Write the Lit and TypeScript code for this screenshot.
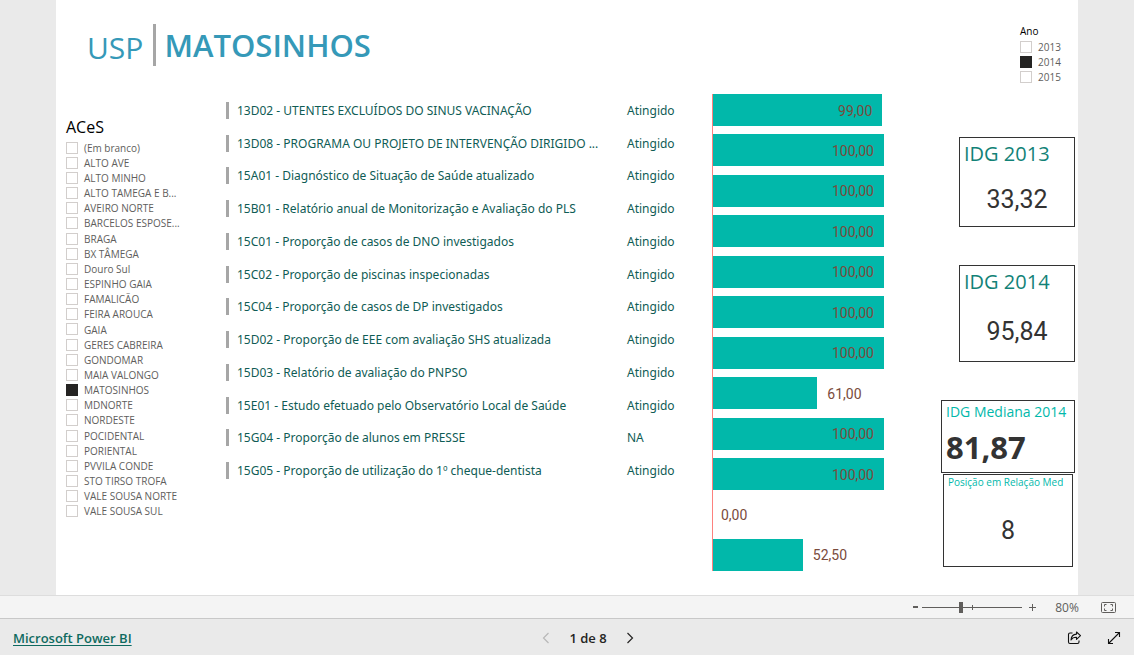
import { LitElement, html, css, svg } from "lit";
import { customElement, property, state } from "lit/decorators.js";

interface Indicator {
  name: string;
  status: string;
}

const ACES = [
  "(Em branco)", "ALTO AVE", "ALTO MINHO", "ALTO TAMEGA E B...", "AVEIRO NORTE",
  "BARCELOS ESPOSE...", "BRAGA", "BX TÂMEGA", "Douro Sul", "ESPINHO GAIA",
  "FAMALICÃO", "FEIRA AROUCA", "GAIA", "GERES CABREIRA", "GONDOMAR",
  "MAIA VALONGO", "MATOSINHOS", "MDNORTE", "NORDESTE", "POCIDENTAL",
  "PORIENTAL", "PVVILA CONDE", "STO TIRSO TROFA", "VALE SOUSA NORTE", "VALE SOUSA SUL",
];

const INDICATORS: Indicator[] = [
  { name: "13D02 - UTENTES EXCLUÍDOS DO SINUS VACINAÇÃO", status: "Atingido" },
  { name: "13D08 - PROGRAMA OU PROJETO DE INTERVENÇÃO DIRIGIDO ...", status: "Atingido" },
  { name: "15A01 - Diagnóstico de Situação de Saúde atualizado", status: "Atingido" },
  { name: "15B01 - Relatório anual de Monitorização e Avaliação do PLS", status: "Atingido" },
  { name: "15C01 - Proporção de casos de DNO investigados", status: "Atingido" },
  { name: "15C02 - Proporção de piscinas inspecionadas", status: "Atingido" },
  { name: "15C04 - Proporção de casos de DP investigados", status: "Atingido" },
  { name: "15D02 - Proporção de EEE com avaliação SHS atualizada", status: "Atingido" },
  { name: "15D03 - Relatório de avaliação do PNPSO", status: "Atingido" },
  { name: "15E01 - Estudo efetuado pelo Observatório Local de Saúde", status: "Atingido" },
  { name: "15G04 - Proporção de alunos em PRESSE", status: "NA" },
  { name: "15G05 - Proporção de utilização do 1º cheque-dentista", status: "Atingido" },
];

const VALUES = [99, 100, 100, 100, 100, 100, 100, 61, 100, 100, 0, 52.5];

@customElement("check-slicer")
class CheckSlicer extends LitElement {
  @property() heading = "";
  @property({ type: Array }) options: string[] = [];
  @property() selected = "";

  static styles = css`
    :host { display: block; }
    .group { margin: 0; padding: 0; border: 0; min-width: 0; }
    .heading {
      padding: 0;
      font-size: var(--heading-size, 16px);
      line-height: var(--heading-line, 20px);
      color: #000;
    }
    .options {
      display: grid;
      grid-auto-rows: 1fr;
      height: var(--options-height, auto);
      margin-top: var(--options-gap, 0);
    }
    .option {
      display: flex;
      align-items: center;
      gap: 6px;
      min-height: 0;
      font-size: 10px;
      line-height: 15px;
      color: #605e5c;
      white-space: nowrap;
    }
    .text { padding-top: 1px; }
    .box {
      appearance: none;
      flex: none;
      width: 12px;
      height: 12px;
      margin: 0;
      border: 1px solid #d2cecc;
      background: #fff;
    }
    .box:checked { background: #252423; border-color: #252423; }
  `;

  render() {
    return html`<fieldset class="group">
      <legend class="heading">${this.heading}</legend>
      <div class="options">
        ${this.options.map((o) => html`<label class="option">
          <input class="box" type="checkbox" .checked=${o === this.selected} /><span class="text">${o}</span>
        </label>`)}
      </div>
    </fieldset>`;
  }
}

@customElement("bar-plot")
class BarPlot extends LitElement {
  @property({ type: Array }) values: number[] = [];

  static styles = css`
    :host { display: block; padding-right: 56px; }
    .plot {
      display: flex;
      flex-direction: column;
      justify-content: space-between;
      height: 477px;
      border-left: 1px solid #fd817e;
    }
    .row { display: flex; align-items: center; height: 32px; }
    .bar {
      flex: none;
      display: flex;
      align-items: center;
      justify-content: flex-end;
      height: 100%;
      background: #01b8aa;
    }
    .value {
      padding: 1px 10px 0;
      font: 14px/20px Roboto, "Liberation Sans", sans-serif;
      color: #7a4b3c;
    }
    .row.empty .value { padding: 1px 8px 0; }
  `;

  render() {
    return html`<div class="plot">
      ${this.values.map((v) => {
        const label = html`<span class="value">${v.toFixed(2).replace(".", ",")}</span>`;
        const inside = v > 80;
        return html`<div class="row ${v === 0 ? "empty" : ""}">
          <div class="bar" style="width:${v}%">${inside ? label : ""}</div>
          ${inside ? "" : label}
        </div>`;
      })}
    </div>`;
  }
}

@customElement("app-root")
class AppRoot extends LitElement {
  @state() private zoom = 39;

  static styles = css`
    :host {
      display: flex;
      flex-direction: column;
      min-height: 100vh;
      background: #eaeaea;
      font-family: "Open Sans", "Noto Sans", sans-serif;
      color: #252423;
    }
    .stage { flex: 1; display: flex; padding: 0 56px; }
    .page {
      flex: 1;
      display: flex;
      min-width: 0;
      padding: 24px 3px 24px 10px;
      background: #fff;
    }
    .main { flex: 1; min-width: 0; }
    .title {
      display: flex;
      align-items: center;
      height: 42px;
      margin: 0 0 28px 21px;
      font-size: 31px;
      line-height: 42px;
      font-weight: 600;
      color: #3599b8;
    }
    .unit {
      padding: 6px 10px 0 0;
      font-size: 30px;
      font-weight: 400;
    }
    .place { padding-left: 8px; border-left: 3px solid #a6a6a6; }
    .body { display: grid; grid-template-columns: 160px 1fr 228px; align-items: start; }
    .aces {
      padding-top: 23px;
      --options-height: 379px;
      --options-gap: 3px;
    }
    .indicators {
      width: 100%;
      height: 393px;
      border-collapse: collapse;
      font-family: "Noto Sans", "Open Sans", sans-serif;
      font-size: 12px;
      line-height: 17px;
      color: #0f5c55;
      white-space: nowrap;
    }
    .indicators td, .indicators th { padding: 0; text-align: left; font-weight: 400; }
    .name { display: block; padding-left: 8px; border-left: 3px solid #a6a6a6; }
    .indicators .status { width: 85px; }

    .side { flex: none; display: flex; flex-direction: column; align-items: flex-end; width: 135px; }
    .years {
      width: 55px;
      margin-bottom: 53px;
      --heading-size: 10px;
      --heading-line: 14px;
      --options-height: 45px;
      --options-gap: 1px;
    }
    .card {
      display: flex;
      flex-direction: column;
      box-sizing: border-box;
      width: 116px;
      border: 1px solid #333;
      background: #fff;
    }
    .card h2 { margin: 0; padding: 0 4px; font-size: 20px; line-height: 32px; font-weight: 400; color: #128277; white-space: nowrap; }
    .figure { margin: 0; flex: 1; text-align: center; font: 25px/32px Roboto, "Liberation Sans", sans-serif; color: #333; }
    .first { height: 90px; margin-bottom: 38px; }
    .first .figure { padding-top: 14px; }
    .second { height: 97px; margin-bottom: 38px; }
    .second .figure { padding-top: 18px; }
    .median { width: 134px; height: 73px; margin-bottom: 1px; }
    .median h2 { font-size: 14px; line-height: 22px; color: #01b8aa; }
    .median .figure { padding: 4px 4px 0; text-align: left; font: 700 31px/40px "Open Sans", sans-serif; }
    .position { width: 130px; height: 93px; margin-right: 2px; }
    .position h2 { font-size: 10px; line-height: 15px; color: #01b8aa; }
    .position .figure { padding-top: 25px; }

    .zoombar {
      display: flex;
      align-items: center;
      justify-content: flex-end;
      height: 22px;
      padding-right: 18px;
      border-top: 1px solid #ddd;
      border-bottom: 1px solid #c8c8c8;
      background: #f4f4f4;
      font-size: 12px;
      color: #605e5c;
    }
    button {
      display: flex;
      align-items: center;
      justify-content: center;
      padding: 0;
      border: 0;
      background: none;
      color: inherit;
      font: inherit;
    }
    .step { width: 14px; height: 20px; }
    .slider {
      appearance: none;
      width: 100px;
      height: 11px;
      margin: 0 3px 0 0;
      background:
        linear-gradient(#605e5c, #605e5c) 50px 50% / 1px 5px no-repeat,
        linear-gradient(#605e5c, #605e5c) 0 50% / 100% 1px no-repeat;
    }
    .slider::-webkit-slider-thumb {
      appearance: none;
      width: 4px;
      height: 11px;
      background: #605e5c;
    }
    .percent { width: 40px; margin-left: 8px; text-align: center; }
    .fit { margin-left: 14px; }
    .footer {
      display: grid;
      grid-template-columns: 1fr auto 1fr;
      align-items: center;
      height: 34px;
      padding: 2px 13px 0;
      font-size: 13px;
      font-weight: 600;
    }
    .brand { color: #0f6a60; text-underline-offset: 2px; }
    .pager { display: flex; align-items: center; gap: 19px; padding-left: 42px; }
    .pager button:disabled { color: #b8b8b8; }
    .actions { display: flex; justify-content: flex-end; gap: 25px; }
  `;

  private chevron(d: string) {
    return html`<svg width="8" height="12" viewBox="0 0 8 12" fill="none" stroke="currentColor" stroke-width="1.2">${svg`<path d=${d} />`}</svg>`;
  }

  render() {
    return html`
      <main class="stage">
        <div class="page">
          <section class="main">
            <h1 class="title"><span class="unit">USP</span><span class="place">MATOSINHOS</span></h1>
            <div class="body">
              <check-slicer class="aces" heading="ACeS" .options=${ACES} selected="MATOSINHOS"></check-slicer>
              <table class="indicators">
                <tbody>
                  ${INDICATORS.map((i) => html`<tr>
                    <th scope="row"><span class="name">${i.name}</span></th>
                    <td class="status">${i.status}</td>
                  </tr>`)}
                </tbody>
              </table>
              <bar-plot .values=${VALUES}></bar-plot>
            </div>
          </section>
          <aside class="side">
            <check-slicer class="years" heading="Ano" .options=${["2013", "2014", "2015"]} selected="2014"></check-slicer>
            <section class="card first"><h2>IDG 2013</h2><p class="figure">33,32</p></section>
            <section class="card second"><h2>IDG 2014</h2><p class="figure">95,84</p></section>
            <section class="card median"><h2>IDG Mediana 2014</h2><p class="figure">81,87</p></section>
            <section class="card position"><h2>Posição em Relação Med</h2><p class="figure">8</p></section>
          </aside>
        </div>
      </main>
      <div class="zoombar">
        <button class="step" aria-label="Reduzir">
          <svg width="5" height="2" viewBox="0 0 5 2"><path d="M0 1h5" stroke="currentColor" stroke-width="2" /></svg>
        </button>
        <input class="slider" type="range" aria-label="Zoom" min="0" max="100" .value=${String(this.zoom)} />
        <button class="step" aria-label="Ampliar">
          <svg width="7" height="7" viewBox="0 0 7 7"><path d="M0 3.500h7M3.500 0v7" stroke="currentColor" /></svg>
        </button>
        <span class="percent">80%</span>
        <button class="fit" aria-label="Ajustar à página">
          <svg width="15" height="11" viewBox="0 0 15 11" fill="none" stroke="currentColor">
            <rect x=".5" y=".5" width="14" height="10" rx="1" />
            <path d="M5.500 2.500H3.500V4.500M9.500 2.500h2V4.500M5.500 8.500H3.500V6.500M9.500 8.500h2V6.500" />
          </svg>
        </button>
      </div>
      <footer class="footer">
        <div><a class="brand" href="#">Microsoft Power BI</a></div>
        <nav class="pager" aria-label="Páginas">
          <button disabled aria-label="Página anterior">${this.chevron("M6.5 1 1.5 6l5 5")}</button>
          <span>1 de 8</span>
          <button aria-label="Página seguinte">${this.chevron("M1.5 1l5 5-5 5")}</button>
        </nav>
        <div class="actions">
          <button aria-label="Partilhar">
            <svg width="15" height="14" viewBox="0 0 15 14" fill="none" stroke="#111" stroke-width="1.1" stroke-linejoin="round">
              <path d="M5.5 2H3Q1.5 2 1.5 3.5V11Q1.5 12.500 3 12.500h7.500Q12 12.500 12 11V9.500" />
              <path d="M9.500 1l4 3.700-4 3.700V6.300C6.800 6.200 5.200 7 4 9c.2-3.200 2-5.600 5.500-5.900Z" />
            </svg>
          </button>
          <button aria-label="Ecrã inteiro">
            <svg width="14" height="14" viewBox="0 0 14 14" fill="none" stroke="#111" stroke-width="1.1">
              <path d="M1.500 12.500l11-11M8 1.500h4.500V6M1.500 8v4.500H6" />
            </svg>
          </button>
        </div>
      </footer>
    `;
  }
}
